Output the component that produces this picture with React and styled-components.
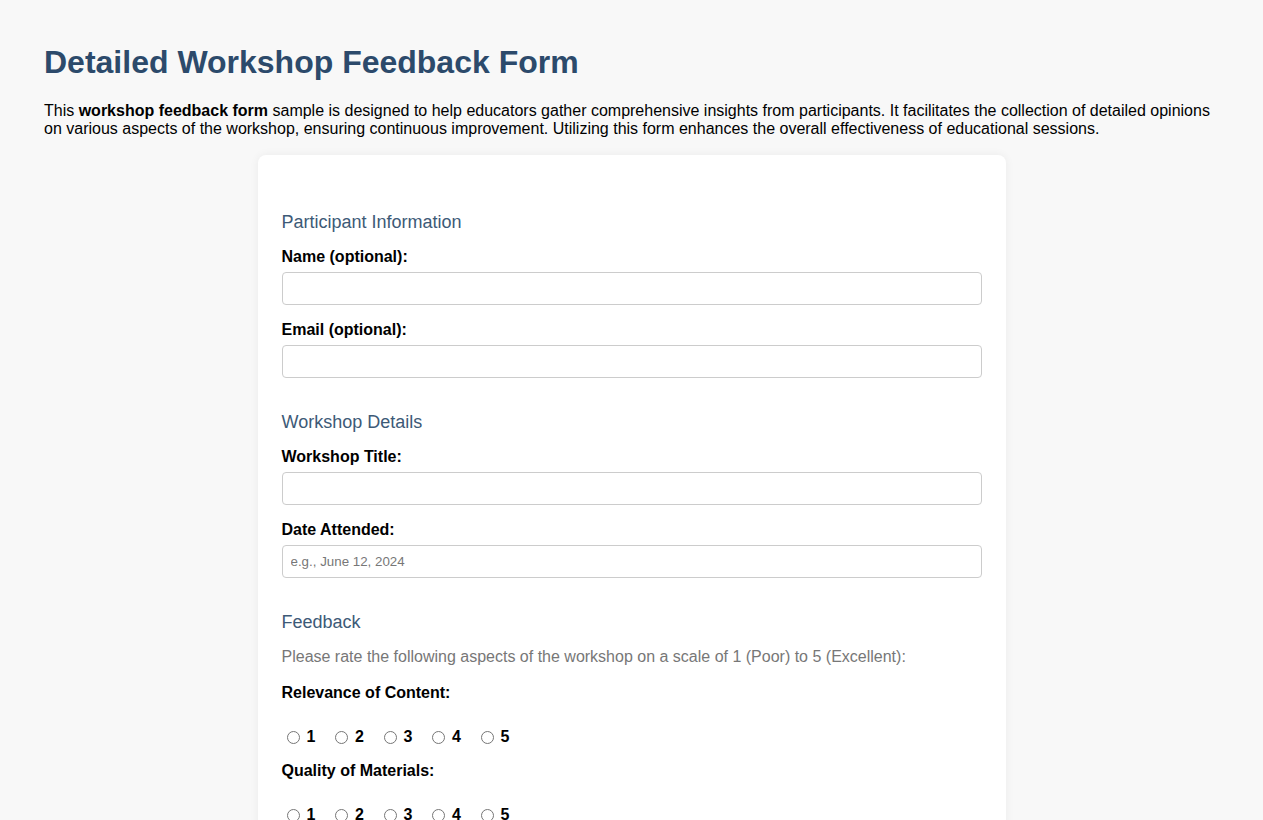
import React from "react";
import styled, { createGlobalStyle } from "styled-components";

const GlobalStyle = createGlobalStyle`
  body {
    margin: 0;
    padding: 24px 44px;
    background: #f8f8f8;
    font-family: "Liberation Sans", Arial, sans-serif;
    color: #000;
  }
`;

const Title = styled.h1`
  font-size: 32px;
  color: #2c4a6b;
  margin: 20px 0 21px;
`;

const Intro = styled.p`
  font-size: 16px;
  line-height: 18px;
  margin: 0 0 17px;
`;

const Card = styled.form`
  max-width: 700px;
  margin: 0 auto;
  padding: 39px 24px 24px;
  background: #fff;
  border-radius: 8px;
  box-shadow: 0 0 10px rgba(0, 0, 0, 0.06);
`;

const Section = styled.section`
  padding-top: 18px;
`;

const SectionTitle = styled.h2`
  font-size: 18px;
  font-weight: normal;
  color: #3d5a77;
  margin: 0 0 15px;
`;

const Label = styled.label`
  display: block;
  font-weight: bold;
  font-size: 16px;
  line-height: 18px;
  margin-bottom: 6px;
`;

const Input = styled.input`
  display: block;
  box-sizing: border-box;
  width: 100%;
  height: 33px;
  padding: 8px;
  margin: 0 0 16px;
  border: 1px solid #ccc;
  border-radius: 4px;
  font-family: "Liberation Sans", Arial, sans-serif;
  font-size: 13.33px;
  &::placeholder {
    color: #777;
  }
`;

const Hint = styled.p`
  color: #777;
  font-size: 16px;
  line-height: 18px;
  margin: 0 0 18px;
`;

const RadioRow = styled.div`
  display: flex;
  margin: 26px 0 16px;
`;

const Option = styled.label`
  display: inline-flex;
  align-items: center;
  font-weight: bold;
  font-size: 16px;
  margin-right: 14.6px;
  input {
    margin: 0 7px 0 5px;
    width: 13px;
    height: 13px;
  }
`;

const Rating = ({ name, label }) => (
  <>
    <Label>{label}</Label>
    <RadioRow>
      {[1, 2, 3, 4, 5].map((n) => (
        <Option key={n}>
          <input type="radio" name={name} value={n} />
          {n}
        </Option>
      ))}
    </RadioRow>
  </>
);

export default function App() {
  return (
    <>
      <GlobalStyle />
      <Title>Detailed Workshop Feedback Form</Title>
      <Intro>
        This <b>workshop feedback form</b> sample is designed to help educators
        gather comprehensive insights from participants. It facilitates the
        collection of detailed opinions on various aspects of the workshop,
        ensuring continuous improvement. Utilizing this form enhances the
        overall effectiveness of educational sessions.
      </Intro>
      <Card>
        <Section>
          <SectionTitle>Participant Information</SectionTitle>
          <Label>Name (optional):</Label>
          <Input type="text" />
          <Label>Email (optional):</Label>
          <Input type="email" />
        </Section>
        <Section>
          <SectionTitle>Workshop Details</SectionTitle>
          <Label>Workshop Title:</Label>
          <Input type="text" />
          <Label>Date Attended:</Label>
          <Input type="text" placeholder="e.g., June 12, 2024" />
        </Section>
        <Section>
          <SectionTitle>Feedback</SectionTitle>
          <Hint>
            Please rate the following aspects of the workshop on a scale of 1
            (Poor) to 5 (Excellent):
          </Hint>
          <Rating name="relevance" label="Relevance of Content:" />
          <Rating name="materials" label="Quality of Materials:" />
          <Rating name="presenter" label="Presenter's Knowledge:" />
        </Section>
      </Card>
    </>
  );
}
